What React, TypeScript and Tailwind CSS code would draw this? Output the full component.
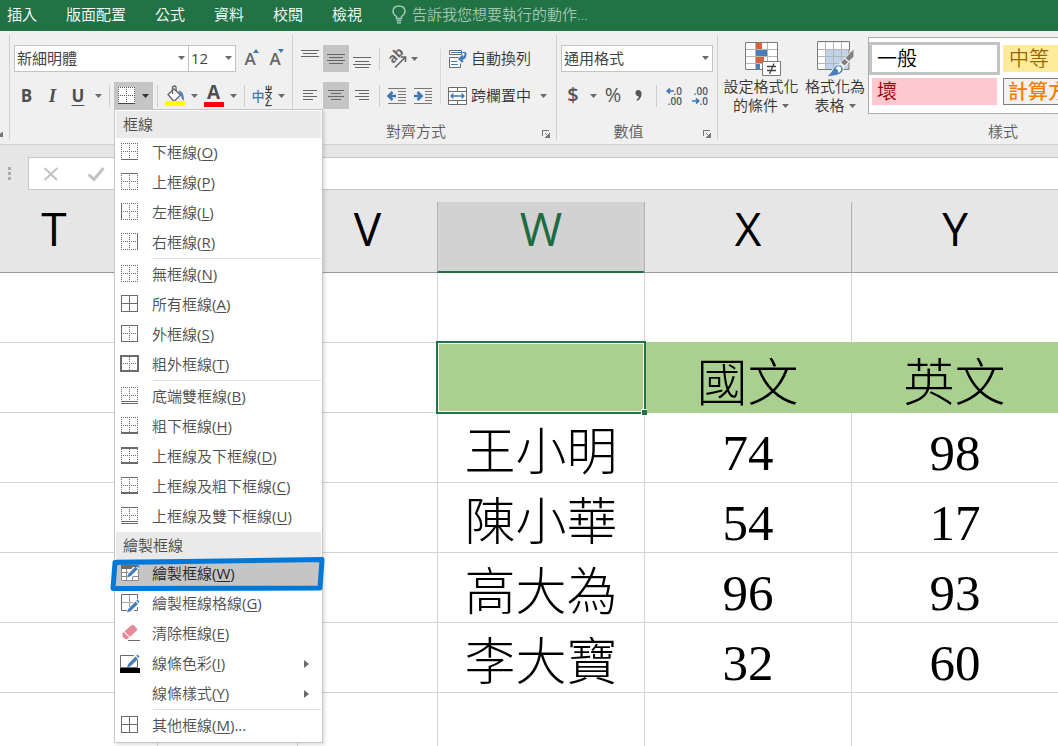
import React from "react";

type Edge = "none" | "thin" | "thick" | "double";

function Caret({ dark = false }: { dark?: boolean }) {
  return (
    <svg width="7" height="4" viewBox="0 0 7 4" className={dark ? "text-[#333333]" : "text-[#6a6a6a]"} aria-hidden="true">
      <path d="M0 0h7L3.5 4z" fill="currentColor" />
    </svg>
  );
}

function CaretButton({ label }: { label: string }) {
  return (
    <button aria-label={label} className="flex h-[27px] w-4 items-center justify-center">
      <Caret />
    </button>
  );
}

function Divider() {
  return <span className="h-[22px] w-px shrink-0 bg-[#cfcfcf]" />;
}

function BorderGlyph({
  top = "none",
  bottom = "none",
  left = "none",
  right = "none",
  inner = false,
}: {
  top?: Edge;
  bottom?: Edge;
  left?: Edge;
  right?: Edge;
  inner?: boolean;
}) {
  const c = "#6b6b6b";
  const dots = "1 1";
  return (
    <svg width="20" height="20" viewBox="0 0 20 20" shapeRendering="crispEdges" aria-hidden="true" className="shrink-0">
      {bottom !== "double" && <path d="M1 16.5h17" stroke={c} strokeDasharray={bottom === "none" ? dots : undefined} />}
      {bottom === "double" && <path d="M1 14.5h17M1 16.5h17" stroke={c} />}
      {bottom === "thick" && <path d="M1 16h17" stroke={c} strokeWidth="2" />}
      <path d="M1 .5h17" stroke={c} strokeDasharray={top === "none" ? dots : undefined} />
      {top === "thick" && <path d="M1 1h17" stroke={c} strokeWidth="2" />}
      <path d="M1.500 0v17" stroke={c} strokeDasharray={left === "none" ? dots : undefined} />
      {left === "thick" && <path d="M1 0v17" stroke={c} strokeWidth="2" />}
      <path d="M17.500 0v17" stroke={c} strokeDasharray={right === "none" ? dots : undefined} />
      {right === "thick" && <path d="M18 0v17" stroke={c} strokeWidth="2" />}
      <path d="M9.500 0v17M1 8.500h17" stroke={c} strokeDasharray={inner ? undefined : dots} />
    </svg>
  );
}

function Pen() {
  return (
    <g>
      <path d="M7 13.500 8.200 10 15.500 2.500 18 5 10.500 12.300z" fill="#4a7ebb" />
      <path d="M16.200 1.800 17.500.6 19.500 2.600 18.500 4z" fill="#4a7ebb" />
    </g>
  );
}

const drawBorder = (
  <svg width="20" height="20" viewBox="0 0 20 20" aria-hidden="true" className="shrink-0">
    <path d="M1 2h18v15H1z" fill="#fff" />
    <path d="M1 1h17v4H1z" fill="#6b6b6b" />
    <path d="M1.500 5v11.500h17V5M1 8.500h17M1 12.500h17M6.500 5v12M12.500 5v12" fill="none" stroke="#8a8a8a" />
    <path d="M7 10l6-7h5v5l-6 5H7z" fill="#fff" />
    <Pen />
  </svg>
);
const drawGrid = (
  <svg width="20" height="20" viewBox="0 0 20 20" aria-hidden="true" className="shrink-0">
    <path d="M17.500 5V.5h-16v16H7M14 16.500h3.500V13" fill="none" stroke="#6b6b6b" />
    <path d="M9.500 1v12M2 8.500h11" stroke="#a8a8a8" />
    <g transform="translate(0 5)">
      <Pen />
    </g>
  </svg>
);
const eraser = (
  <svg width="20" height="20" viewBox="0 0 20 20" aria-hidden="true" className="shrink-0">
    <path d="M11.500 1.200q1.200-1 2.400 0l3 3.300q.8 1-.2 2L10 13 4.500 7.200z" fill="#e8899a" />
    <path d="M3.700 8 9.200 13.800 7.500 15H4.800L2.500 12.500V9.200z" fill="#e8899a" />
    <path d="M8 16.500h12" stroke="#6b6b6b" />
  </svg>
);
const lineColor = (
  <svg width="20" height="20" viewBox="0 0 20 20" aria-hidden="true" className="shrink-0">
    <path d="M14 1.500H.5v12h17V6" fill="none" stroke="#6b6b6b" />
    <path d="M0 14h20v5H0z" fill="#000" />
    <Pen />
  </svg>
);

type Item = { text: string; mnemonic: string; icon: React.ReactNode; sub?: boolean; active?: boolean; tail?: string };

const group1: Item[] = [
  { text: "下框線", mnemonic: "O", icon: <BorderGlyph bottom="thin" /> },
  { text: "上框線", mnemonic: "P", icon: <BorderGlyph top="thin" /> },
  { text: "左框線", mnemonic: "L", icon: <BorderGlyph left="thin" /> },
  { text: "右框線", mnemonic: "R", icon: <BorderGlyph right="thin" /> },
];
const group2: Item[] = [
  { text: "無框線", mnemonic: "N", icon: <BorderGlyph /> },
  { text: "所有框線", mnemonic: "A", icon: <BorderGlyph top="thin" bottom="thin" left="thin" right="thin" inner /> },
  { text: "外框線", mnemonic: "S", icon: <BorderGlyph top="thin" bottom="thin" left="thin" right="thin" /> },
  { text: "粗外框線", mnemonic: "T", icon: <BorderGlyph top="thick" bottom="thick" left="thick" right="thick" /> },
];
const group3: Item[] = [
  { text: "底端雙框線", mnemonic: "B", icon: <BorderGlyph bottom="double" /> },
  { text: "粗下框線", mnemonic: "H", icon: <BorderGlyph bottom="thick" /> },
  { text: "上框線及下框線", mnemonic: "D", icon: <BorderGlyph top="thick" bottom="thick" /> },
  { text: "上框線及粗下框線", mnemonic: "C", icon: <BorderGlyph top="thin" bottom="thick" /> },
  { text: "上框線及雙下框線", mnemonic: "U", icon: <BorderGlyph top="thin" bottom="double" /> },
];
const group4: Item[] = [
  { text: "繪製框線", mnemonic: "W", icon: drawBorder, active: true },
  { text: "繪製框線格線", mnemonic: "G", icon: drawGrid },
  { text: "清除框線", mnemonic: "E", icon: eraser },
  { text: "線條色彩", mnemonic: "I", icon: lineColor, sub: true },
  { text: "線條樣式", mnemonic: "Y", icon: <span className="w-5" />, sub: true },
];
const group5: Item[] = [
  {
    text: "其他框線",
    mnemonic: "M",
    tail: "...",
    icon: <BorderGlyph top="thin" bottom="thin" left="thin" right="thin" inner />,
  },
];

function MenuItems({ items }: { items: Item[] }) {
  return (
    <>
      {items.map((it) => (
        <button
          key={it.mnemonic}
          role="menuitem"
          className={
            it.active
              ? "relative flex h-[30px] w-full items-center gap-3 bg-[#c5c5c5] pl-1 text-left text-[#262626]"
              : "flex h-[30px] w-full items-center gap-3 pl-1 text-left text-[#505050]"
          }
        >
          {it.icon}
          <span className="grow pb-[2px] whitespace-nowrap">
            {it.text}
            <span className="font-normal">
              (<span className="underline underline-offset-2">{it.mnemonic}</span>){it.tail}
            </span>
          </span>
          {it.sub && (
            <svg width="5" height="8" viewBox="0 0 5 8" className="mr-3" aria-hidden="true">
              <path d="M0 0l5 4-5 4z" fill="#6a6a6a" />
            </svg>
          )}
          {it.active && (
            <svg
              width="216"
              height="36"
              viewBox="0 0 216 36"
              className="pointer-events-none absolute -top-[3px] -left-[6px]"
              aria-hidden="true"
            >
              <path d="M5 6.500 212 3.500 210 32 3 32.500z" fill="none" stroke="#0078d7" strokeWidth="5" strokeLinejoin="round" />
            </svg>
          )}
        </button>
      ))}
    </>
  );
}

function MenuHeading({ children }: { children: React.ReactNode }) {
  return <div className="flex h-[27px] items-center bg-[#eaeaea] pb-[2px] pl-[7px] text-[#4c4c4c]">{children}</div>;
}

function MenuRule() {
  return <div className="mb-px ml-[37px] h-px bg-[#dfdfdf]" />;
}

function BordersMenu() {
  return (
    <div
      role="menu"
      className="absolute top-full left-0 z-20 w-[209px] border border-[#c6c6c6] bg-white p-px text-[15px] leading-[20px] shadow-[2px_2px_3px_rgba(0,0,0,0.12)]"
    >
      <MenuHeading>框線</MenuHeading>
      <MenuItems items={group1} />
      <MenuRule />
      <MenuItems items={group2} />
      <MenuRule />
      <MenuItems items={group3} />
      <MenuHeading>繪製框線</MenuHeading>
      <MenuItems items={group4} />
      <MenuRule />
      <MenuItems items={group5} />
    </div>
  );
}

function Lines({ rows }: { rows: [number, number, number][] }) {
  return (
    <svg width="20" height="20" viewBox="0 0 20 20" shapeRendering="crispEdges" aria-hidden="true">
      {rows.map(([x, y, w]) => (
        <path key={y} d={`M${x} ${y}.5h${w}`} stroke="#666666" />
      ))}
    </svg>
  );
}

function ToolButton({ label, on, children }: { label: string; on?: boolean; children: React.ReactNode }) {
  return (
    <button
      aria-label={label}
      className={
        on
          ? "flex h-[27px] w-[26px] items-center justify-center bg-[#c5c5c5]"
          : "flex h-[27px] w-[26px] items-center justify-center"
      }
    >
      {children}
    </button>
  );
}

function GroupLabel({ children, launcher = true }: { children: React.ReactNode; launcher?: boolean }) {
  return (
    <div className="mt-auto flex h-[18px] items-center text-[#5c5c5c]">
      <span className="grow text-center">{children}</span>
      {launcher && (
        <button aria-label="更多設定" className="mr-1 flex w-[13px] justify-center pt-[6px]">
          <svg width="8" height="8" viewBox="0 0 8 8" shapeRendering="crispEdges" aria-hidden="true">
            <path d="M.5 6V.5H7M3 3l3 3" fill="none" stroke="#777777" />
            <path d="M7.500 3v4.500H3M6 5v2H4z" fill="#777777" stroke="#777777" />
          </svg>
        </button>
      )}
    </div>
  );
}

function Combo({ label, value, width }: { label: string; value: string; width: string }) {
  return (
    <div className={`relative ${width}`}>
      <select
        aria-label={label}
        defaultValue={value}
        className="h-[27px] w-full appearance-none border border-[#c3c3c3] bg-white pb-[2px] pl-[2px] text-[15px] font-normal text-[#444444]"
      >
        <option>{value}</option>
      </select>
      <span className="pointer-events-none absolute top-[11px] right-1">
        <Caret />
      </span>
    </div>
  );
}

function FontGroup() {
  return (
    <section className="flex w-[283px] shrink-0 flex-col gap-[10px] border-r border-[#d0d0d0] pt-[10px] pl-1">
      <div className="flex items-center">
        <Combo label="字型" value="新細明體" width="w-[175px]" />
        <Combo label="字型大小" value="12" width="-ml-px w-[48px]" />
        <div className="ml-[3px] flex text-[17px] leading-[27px] font-semibold text-[#666666]">
          <button aria-label="放大字型" className="flex w-[25px] items-start justify-center">
            A
            <svg width="6" height="4" viewBox="0 0 6 4" className="-ml-[3px] mt-1" aria-hidden="true">
              <path d="M0 4h6L3 0z" fill="#3f78b5" />
            </svg>
          </button>
          <button aria-label="縮小字型" className="flex w-[25px] items-start justify-center">
            A
            <svg width="6" height="4" viewBox="0 0 6 4" className="-ml-[3px] mt-1" aria-hidden="true">
              <path d="M0 0h6L3 4z" fill="#3f78b5" />
            </svg>
          </button>
        </div>
      </div>
      <div className="flex items-center text-[17px] leading-[27px] font-bold text-[#505050]">
        <button aria-label="粗體" className="w-[25px]">
          B
        </button>
        <button aria-label="斜體" className="w-[27px] font-['Liberation_Serif',serif] text-[19px] italic">
          I
        </button>
        <button aria-label="底線" className="w-6 underline underline-offset-3">
          U
        </button>
        <CaretButton label="底線樣式" />
        <span className="mr-1 ml-[3px] flex">
          <Divider />
        </span>
        <div className="relative font-[350]">
          <button
            aria-label="框線"
            aria-haspopup="menu"
            aria-expanded="true"
            className="flex h-[27px] w-[39px] items-center gap-[7px] bg-[#c5c5c5] pl-[3px]"
          >
            <svg width="18" height="18" viewBox="0 0 18 18" shapeRendering="crispEdges" aria-hidden="true">
              <path d="M1 0h17v17H1z" fill="#fff" />
              <path d="M1 .5h17M1 8.500h17M1.500 0v17M9.500 0v17M17.500 0v17" stroke="#555555" strokeDasharray="1 1" />
              <path d="M1 16.500h17" stroke="#444444" />
            </svg>
            <Caret dark />
          </button>
          <BordersMenu />
        </div>
        <span className="mr-[5px] ml-1 flex">
          <Divider />
        </span>
        <button aria-label="填滿色彩" className="flex w-[23px] justify-center">
          <svg width="22" height="22" viewBox="0 0 22 22" aria-hidden="true">
            <path d="M4 9.500 10 4l6.500 6-6.500 6.500z" fill="#fff" stroke="#666666" strokeWidth="1.300" />
            <path d="M8.500 9V2.800q0-1.800 1.800-1.800t1.800 1.800V6" fill="none" stroke="#666666" strokeWidth="1.300" />
            <path d="M14 5.500q6 0 6 10-2.500-.5-3-5.500z" fill="#4a7ebb" />
            <path d="M1 16h20v5H1z" fill="#ffff00" />
          </svg>
        </button>
        <CaretButton label="填滿色彩選項" />
        <button aria-label="字型色彩" className="flex w-[23px] flex-col items-center">
          <span className="h-[16px] text-[19px] leading-[16px]">A</span>
          <span className="mt-[2px] h-[5px] w-5 bg-[#ff0000]" />
        </button>
        <CaretButton label="字型色彩選項" />
        <span className="mr-[6px] ml-[3px] flex">
          <Divider />
        </span>
        <button aria-label="注音標示" className="flex w-[22px] items-center justify-center text-[#3f78b5]">
          <span className="text-[13px] leading-[20px] font-medium">中</span>
          <span className="flex flex-col text-[8px] leading-[7px] text-[#333333]">
            <span>ㄓ</span>
            <span>ㄨ</span>
            <span>ㄥ</span>
          </span>
        </button>
        <CaretButton label="注音標示選項" />
      </div>
    </section>
  );
}

function AlignmentGroup() {
  return (
    <section className="flex w-[264px] shrink-0 flex-col border-r border-[#d0d0d0] pt-[10px] text-[#333333]">
      <div className="flex pl-1">
        <div className="flex flex-col gap-[10px]">
          <div className="flex items-center">
            <ToolButton label="靠上對齊">
              <Lines rows={[[1, 1, 18], [3, 4, 14], [1, 7, 18]]} />
            </ToolButton>
            <ToolButton label="置中對齊" on>
              <Lines rows={[[1, 5, 18], [3, 8, 14], [1, 11, 18], [3, 14, 14]]} />
            </ToolButton>
            <ToolButton label="靠下對齊">
              <Lines rows={[[1, 8, 18], [3, 12, 14], [1, 15, 18], [3, 18, 14]]} />
            </ToolButton>
            <span className="mr-1 ml-1 flex">
              <Divider />
            </span>
            <button aria-label="方向" className="flex h-[27px] w-[26px] items-center justify-center">
              <svg width="20" height="20" viewBox="0 0 20 20" aria-hidden="true" className="text-[#666666]">
                <text x="0" y="0" transform="translate(6 15) rotate(-45)" fontSize="13" fontWeight="700" fill="currentColor">
                  ab
                </text>
                <path d="M8 18.500 18 8.500M13.500 8H18.500V13" fill="none" stroke="currentColor" strokeWidth="1.600" />
              </svg>
            </button>
            <span className="-ml-1 flex">
              <CaretButton label="方向選項" />
            </span>
          </div>
          <div className="flex items-center">
            <ToolButton label="靠左對齊">
              <Lines rows={[[3, 4, 14], [3, 7, 10], [3, 10, 14], [3, 13, 10]]} />
            </ToolButton>
            <ToolButton label="置中" on>
              <Lines rows={[[2, 4, 16], [5, 7, 10], [2, 10, 16], [5, 13, 10]]} />
            </ToolButton>
            <ToolButton label="靠右對齊">
              <Lines rows={[[3, 4, 14], [7, 7, 10], [3, 10, 14], [7, 13, 10]]} />
            </ToolButton>
            <span className="mr-1 ml-1 flex">
              <Divider />
            </span>
            <ToolButton label="減少縮排">
              <svg width="20" height="18" viewBox="0 0 20 18" aria-hidden="true">
                <path d="M1 1.500h18M11 4.500h8M11 7.500h8M11 10.500h8M11 13.500h8M1 16.500h18" stroke="#777777" />
                <path d="M9 9H3M5.500 5 1.500 9l4 4" fill="none" stroke="#3f78b5" strokeWidth="2.600" />
              </svg>
            </ToolButton>
            <ToolButton label="增加縮排">
              <svg width="20" height="18" viewBox="0 0 20 18" aria-hidden="true">
                <path d="M1 1.500h18M12 4.500h7M12 7.500h7M12 10.500h7M12 13.500h7M1 16.500h18" stroke="#777777" />
                <path d="M1 9h6M4.500 5l4 4-4 4" fill="none" stroke="#3f78b5" strokeWidth="2.600" />
              </svg>
            </ToolButton>
          </div>
        </div>
        <span className="mt-1 ml-1 h-[55px] w-px bg-[#dadada]" />
        <div className="ml-[6px] flex flex-col gap-[10px] whitespace-nowrap">
          <button className="flex h-[27px] items-center gap-1">
            <svg width="20" height="20" viewBox="0 0 20 20" aria-hidden="true">
              <path d="M2.500 1.500h12v4h-12zM2.500 8.500v10h11v-4M2.500 8.500h9" fill="#fff" stroke="#6b6b6b" />
              <path d="M4 3.500h15M4 12.500h6M4 15.500h7" stroke="#3f78b5" />
              <path d="M18.500 4q.5 6-5 6M16 6.500l-3.500 3.500L16 13" fill="none" stroke="#3f78b5" strokeWidth="2" />
            </svg>
            <span className="pb-[2px]">自動換列</span>
          </button>
          <div className="flex">
            <button className="flex h-[27px] items-center gap-1">
              <svg width="20" height="20" viewBox="0 0 20 20" aria-hidden="true">
                <path d="M1.500 1.500h18v17h-18zM1.500 5.500h18M1.500 14.500h18M10.500 1v4M10.500 15v4" fill="#fff" stroke="#6b6b6b" />
                <path d="M4 10h13M6.500 7.500 4 10l2.500 2.500M14.500 7.500 17 10l-2.500 2.500" fill="none" stroke="#3f78b5" strokeWidth="1.400" />
              </svg>
              <span className="pb-[2px]">跨欄置中</span>
            </button>
            <span className="ml-1">
              <CaretButton label="跨欄置中選項" />
            </span>
          </div>
        </div>
      </div>
      <GroupLabel>對齊方式</GroupLabel>
    </section>
  );
}

function NumberGroup() {
  return (
    <section className="flex w-[161px] shrink-0 flex-col border-r border-[#d0d0d0] pt-[10px]">
      <div className="flex flex-col gap-[10px] pl-1">
        <Combo label="數值格式" value="通用格式" width="w-[152px]" />
        <div className="flex h-[27px] items-center text-[20px] leading-[27px] text-[#555555]">
          <button aria-label="會計數字格式" className="w-6 pb-[2px] font-semibold">
            $
          </button>
          <CaretButton label="會計數字格式選項" />
          <button aria-label="百分比樣式" className="w-6 pb-[2px] font-normal">
            %
          </button>
          <button aria-label="千分位樣式" className="flex w-[26px] justify-center">
            <svg width="7" height="11" viewBox="0 0 7 11" aria-hidden="true">
              <path d="M3 0q3.500 0 3.500 4 0 4.500-4.500 7l-.6-1q2.400-1.800 2.400-3.600Q.5 6 .5 3 .7 0 3 0z" fill="#555555" />
            </svg>
          </button>
          <span className="mr-[6px] ml-[5px] flex">
            <Divider />
          </span>
          <button aria-label="增加小數位數" className="flex w-[22px] flex-col items-end pr-[3px] text-[10px] leading-[10px] font-semibold">
            <span className="flex items-center">
              <svg width="8" height="6" viewBox="0 0 8 6" aria-hidden="true">
                <path d="M8 3H2M4 .5 1.200 3 4 5.500" fill="none" stroke="#3f78b5" strokeWidth="1.700" />
              </svg>
              .0
            </span>
            <span>.00</span>
          </button>
          <button aria-label="減少小數位數" className="ml-1 flex w-[22px] flex-col items-end pr-[3px] text-[10px] leading-[10px] font-semibold">
            <span>.00</span>
            <span className="flex items-center">
              <svg width="8" height="6" viewBox="0 0 8 6" aria-hidden="true">
                <path d="M0 3h6M4 .5 6.800 3 4 5.500" fill="none" stroke="#3f78b5" strokeWidth="1.700" />
              </svg>
              .0
            </span>
          </button>
        </div>
      </div>
      <GroupLabel>數值</GroupLabel>
    </section>
  );
}

function StylesGroup() {
  return (
    <section className="flex w-[570px] shrink-0 flex-col pt-[2px] text-[#333333]">
      <div className="flex">
        <button className="mt-[4px] flex w-[86px] flex-col items-center">
          <svg width="38" height="36" viewBox="0 0 38 36" aria-hidden="true" className="ml-1">
            <path d="M1 2h33v27H1z" fill="#fff" />
            <path d="M11 2h7v7h-7zM11 16h9v6h-9z" fill="#d9613f" />
            <path d="M11 9h12v6H11zM11 23h5v6h-5z" fill="#4a7ebb" />
            <path d="M1 8.500h33M1 15.500h33M1 22.500h33M11.500 2v27M23.500 2v27" stroke="#b5b5b5" />
            <path d="M1.500 1.500h32v27h-32z" fill="none" stroke="#7a7a7a" />
            <path d="M18.500 20.500h18v14h-18z" fill="#fff" stroke="#7a7a7a" />
            <path d="M23 25.500h9M23 29.500h9M30 22.500 25.500 33" stroke="#444444" strokeWidth="1.300" />
          </svg>
          <span className="leading-[19px] whitespace-nowrap">設定格式化</span>
          <span className="flex items-center gap-1 leading-[19px] whitespace-nowrap">
            的條件
            <Caret />
          </span>
        </button>
        <button className="mt-[4px] flex w-[64px] flex-col items-center pr-[2px] whitespace-nowrap">
          <svg width="38" height="36" viewBox="0 0 38 36" aria-hidden="true">
            <path d="M1 2h32v27H1z" fill="#fff" />
            <path d="M9 8h24v21H9z" fill="#bfd3ea" />
            <path d="M1 8.500h32M1 15.500h32M1 22.500h32M9.500 1v28M17.500 1v28M25.500 1v28" stroke="#b5b5b5" />
            <path d="M33 8.500v20H1.500V.5h32V9" fill="none" stroke="#7a7a7a" />
            <path d="M38 7v9L27 28l-5-4z" fill="#f0f0f0" />
            <path d="M37.500 8.500v7L33 20l-3.500-3zM28.500 18l3.500 3-3.500 3.500-3.500-3z" fill="#808080" />
            <path d="M10.500 35.500q5-3.500 7-8.500 3-4.500 7-3 4.500 3 1.500 7.500-4 4-15.500 4z" fill="#4a7ebb" stroke="#f0f0f0" />
            <path d="M19.500 27.500q2.500-4 5.500-1 1 3.500-3 5.500 1-3-2.500-4.500z" fill="#fff" />
          </svg>
          <span className="leading-[19px]">格式化為</span>
          <span className="flex items-center gap-1 leading-[19px]">
            表格
            <Caret />
          </span>
        </button>
        <div className="grid h-[77px] grow grid-cols-[134px_134px_134px] grid-rows-[40px_27px] border border-[#ababab] bg-white text-[20px] leading-[20px]">
          <button className="mt-1 flex h-[33px] w-[131px] items-center border-3 border-[#c3c3c3] pl-[5px] text-black">一般</button>
          <button className="mt-[7px] h-[27px] w-[125px] bg-[#ffeb9c] pl-[6px] text-left text-[#9c6500]">中等</button>
          <span />
          <button className="ml-[3px] h-[27px] w-[125px] bg-[#ffc7ce] pl-[5px] text-left text-[#9c0006]">壞</button>
          <button className="h-[27px] w-[125px] border border-[#7f7f7f] bg-[#f2f2f2] pl-1 text-left font-medium whitespace-nowrap text-[#fa7d00]">
            計算方式
          </button>
        </div>
      </div>
      <GroupLabel launcher={false}>樣式</GroupLabel>
    </section>
  );
}

const tabs = ["插入", "版面配置", "公式", "資料", "校閱", "檢視"];

function TabBar() {
  return (
    <nav className="flex h-[31px] items-center gap-[29px] overflow-hidden bg-[#217346] pb-[3px] pl-[7px] whitespace-nowrap text-white">
      {tabs.map((t) => (
        <a key={t} href="#" className="leading-[20px]">
          {t}
        </a>
      ))}
      <button className="flex items-center gap-[6px] pl-px text-[#a3c7b3]">
        <svg width="14" height="19" viewBox="0 0 14 19" fill="none" stroke="currentColor" strokeWidth="1.500" aria-hidden="true">
          <path d="M4.500 13.500v-2Q1 9 1 6.500 1.200 1 7 1t6 5.500Q13 9 9.500 11.500v2zM4.500 15.500h5M5 17.700h4" />
        </svg>
        告訴我您想要執行的動作...
      </button>
    </nav>
  );
}

function FormulaBar() {
  return (
    <div className="flex h-[45px] items-end bg-[#e6e6e6]">
      <svg width="28" height="33" viewBox="0 0 28 33" className="shrink-0" aria-hidden="true">
        <path d="M8 10h3v3H8zM8 15h3v3H8zM8 20h3v3H8z" fill="#ababab" />
      </svg>
      <div className="flex h-[33px] grow items-center border border-r-0 border-[#c6c6c6] bg-white">
        <button aria-label="取消" className="flex w-[44px] justify-center">
          <svg width="16" height="16" viewBox="0 0 16 16" aria-hidden="true">
            <path d="M1.500 2 14 14M14.500 2 1.500 14" stroke="#c2c2c2" strokeWidth="2" />
          </svg>
        </button>
        <button aria-label="輸入" className="flex w-[46px] justify-center">
          <svg width="18" height="16" viewBox="0 0 18 16" aria-hidden="true">
            <path d="M1.500 8.500 7 13.500 16.500 2" fill="none" stroke="#c2c2c2" strokeWidth="3" />
          </svg>
        </button>
        <input aria-label="資料編輯列" className="h-full min-w-0 grow bg-transparent px-2 outline-none" />
      </div>
    </div>
  );
}

const columns = ["T", "U", "V", "W", "X", "Y"];
const rows = [
  ["王小明", "74", "98"],
  ["陳小華", "54", "17"],
  ["高大為", "96", "93"],
  ["李大寶", "32", "60"],
];

function Sheet() {
  const blank = "border-b border-l border-[#d4d4d4]";
  return (
    <div className="overflow-hidden bg-[#e6e6e6] pt-3">
      <table className="-ml-[50px] w-[calc(100%+50px)] table-fixed border-separate border-spacing-0 bg-white">
        <colgroup>
          <col className="w-[207px]" />
          <col className="w-[140px]" />
          <col className="w-[140px]" />
          <col />
          <col />
          <col />
        </colgroup>
        <thead>
          <tr className="h-[71px] text-[46px] leading-[46px]">
            {columns.map((c) => (
              <th
                key={c}
                scope="col"
                className={
                  c === "W"
                    ? "border-b-2 border-l border-b-[#217346] border-l-[#b1b1b1] bg-[#d2d2d2] p-0 pb-[18px] font-normal text-[#1e6b41]"
                    : "border-b border-l border-b-[#999999] border-l-[#b1b1b1] bg-[#e6e6e6] p-0 pb-[18px] font-normal text-black"
                }
              >
                {c}
              </th>
            ))}
          </tr>
        </thead>
        <tbody className="text-center font-['Liberation_Serif','Noto_Sans_CJK_TC',serif] text-[51px] leading-[51px] font-light text-black">
          <tr className="h-[70px]">
            <td className={blank} />
            <td className={blank} />
            <td className={blank} />
            <td className={blank} />
            <td className="border-b border-l border-b-[#a9d08e] border-l-[#d4d4d4]" />
            <td className="border-b border-l border-b-[#a9d08e] border-l-[#d4d4d4]" />
          </tr>
          <tr className="h-[70px]">
            <td className={blank} />
            <td className={blank} />
            <td className={blank} />
            <td className="relative bg-[#a9d08e] p-0">
              <div className="absolute -top-[2px] -right-[2px] -bottom-px -left-px border-2 border-[#217346]">
                <div className="h-full border border-white" />
                <span className="absolute -right-[3px] -bottom-[3px] size-[6px] border-t border-l border-white bg-[#217346]" />
              </div>
            </td>
            <td className="bg-[#a9d08e] p-0 pt-3">國文</td>
            <td className="bg-[#a9d08e] p-0 pt-3">英文</td>
          </tr>
          {rows.map((r) => (
            <tr key={r[0]} className="h-[70px]">
              <td className={blank} />
              <td className={blank} />
              <td className={blank} />
              {r.map((v) => (
                <td key={v} className="border-b border-l border-[#d4d4d4] p-0 pt-3">
                  {v}
                </td>
              ))}
            </tr>
          ))}
          <tr className="h-[70px]">
            {columns.map((c) => (
              <td key={c} className={blank} />
            ))}
          </tr>
        </tbody>
      </table>
    </div>
  );
}

export default function App() {
  return (
    <div className="h-screen overflow-hidden bg-white font-['Open_Sans','Noto_Sans_CJK_TC',sans-serif] text-[15px] leading-[20px] font-[350]">
      <TabBar />
      <div className="flex h-[114px] border-b border-[#d2d2d2] bg-[#f0f0f0] py-1">
        <div className="flex w-[10px] shrink-0 items-end border-r border-[#d0d0d0] pb-[3px]">
          <svg width="3" height="5" viewBox="0 0 3 5" aria-hidden="true">
            <path d="M0 4V2l2-2h1v5H0z" fill="#777777" />
          </svg>
        </div>
        <FontGroup />
        <AlignmentGroup />
        <NumberGroup />
        <StylesGroup />
      </div>
      <FormulaBar />
      <Sheet />
    </div>
  );
}
